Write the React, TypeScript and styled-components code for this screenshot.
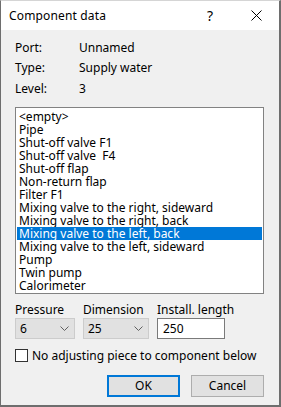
import React, { useState } from 'react';
import styled, { createGlobalStyle } from 'styled-components';

const GlobalStyle = createGlobalStyle`
  html, body {
    margin: 0;
    padding: 0;
    background: #ffffff;
  }
  body {
    font-family: 'Noto Sans', 'Liberation Sans', sans-serif;
    font-size: 12px;
    line-height: 15px;
    color: #000000;
  }
`;

const Window = styled.div`
  box-sizing: border-box;
  width: 281px;
  height: 407px;
  display: flex;
  flex-direction: column;
  background: #f0f0f0;
  border-top: 1px solid #d5d5d5;
  border-left: 1px solid #6e6e6e;
  border-right: 2px solid #6e6e6e;
  border-bottom: 2px solid #6e6e6e;
  overflow: hidden;
`;

const TitleBar = styled.div`
  height: 29px;
  flex-shrink: 0;
  display: flex;
  align-items: center;
  background: #ffffff;
  padding-left: 8px;
`;

const Title = styled.div`
  flex: 1;
  font-size: 12px;
  letter-spacing: 0.15px;
`;

const TitleButton = styled.div`
  width: 46px;
  height: 29px;
  display: flex;
  align-items: center;
  justify-content: center;
  font-size: 14px;
`;

const Body = styled.div`
  flex: 1;
  display: flex;
  flex-direction: column;
  padding: 7px 15px 0 14px;
`;

const InfoRow = styled.div`
  display: grid;
  grid-template-columns: 64px 1fr;
  height: 20.5px;
  align-items: center;
`;

const ListBox = styled.div`
  margin-top: 8px;
  box-sizing: border-box;
  height: 187px;
  flex-shrink: 0;
  background: #ffffff;
  border: 1px solid #828282;
  padding: 2px 1px;
  display: flex;
  flex-direction: column;
`;

const ListItem = styled.div<{ selected: boolean }>`
  height: 13px;
  line-height: 13px;
  padding-left: 2px;
  white-space: pre;
  cursor: default;
  background: ${({ selected }) => (selected ? '#0078d7' : 'transparent')};
  color: ${({ selected }) => (selected ? '#ffffff' : '#000000')};
`;

const FieldRow = styled.div`
  margin-top: 8px;
  display: flex;
  gap: 8px;
`;

const Field = styled.div<{ width: number }>`
  width: ${({ width }) => width}px;
  display: flex;
  flex-direction: column;
  gap: 1px;
`;

const FieldLabel = styled.span`
  white-space: nowrap;
  line-height: 15px;
`;

const Combo = styled.div`
  box-sizing: border-box;
  height: 21px;
  display: flex;
  align-items: center;
  justify-content: space-between;
  padding: 0 5px 0 4px;
  background: #e1e1e1;
  border: 1px solid #cccccc;
`;

const TextInput = styled.div`
  box-sizing: border-box;
  height: 21px;
  display: flex;
  align-items: center;
  padding-left: 5px;
  background: #ffffff;
  border: 1px solid #7a7a7a;
`;

const CheckRow = styled.label`
  margin-top: 9px;
  display: flex;
  align-items: center;
  gap: 4px;
  white-space: nowrap;
`;

const CheckBox = styled.span`
  box-sizing: border-box;
  width: 13px;
  height: 13px;
  background: #ffffff;
  border: 1px solid #333333;
`;

const ButtonRow = styled.div`
  margin-top: 12px;
  display: flex;
  justify-content: flex-end;
  gap: 11px;
`;

const Button = styled.button<{ primary?: boolean }>`
  box-sizing: border-box;
  width: 73px;
  height: 22px;
  padding: 0;
  font: inherit;
  line-height: 15px;
  color: #000000;
  background: #e1e1e1;
  border: ${({ primary }) => (primary ? '2px solid #0078d7' : '1px solid #adadad')};
`;

const items = [
  '<empty>',
  'Pipe',
  'Shut-off valve F1',
  'Shut-off valve  F4',
  'Shut-off flap',
  'Non-return flap',
  'Filter F1',
  'Mixing valve to the right, sideward',
  'Mixing valve to the right, back',
  'Mixing valve to the left, back',
  'Mixing valve to the left, sideward',
  'Pump',
  'Twin pump',
  'Calorimeter',
];

const Chevron = () => (
  <svg width="9" height="5" viewBox="0 0 9 5">
    <path d="M0.5 0.5 L4.5 4.5 L8.5 0.5" fill="none" stroke="#606060" strokeWidth="1" />
  </svg>
);

const App = () => {
  const [selected, setSelected] = useState(9);

  return (
    <>
      <GlobalStyle />
      <Window>
        <TitleBar>
          <Title>Component data</Title>
          <TitleButton>?</TitleButton>
          <TitleButton>
            <svg width="11" height="11" viewBox="0 0 11 11">
              <path d="M0.5 0.5 L10.5 10.5 M10.5 0.5 L0.5 10.5" stroke="#000000" strokeWidth="1" />
            </svg>
          </TitleButton>
        </TitleBar>
        <Body>
          <InfoRow>
            <span>Port:</span>
            <span>Unnamed</span>
          </InfoRow>
          <InfoRow>
            <span>Type:</span>
            <span>Supply water</span>
          </InfoRow>
          <InfoRow>
            <span>Level:</span>
            <span>3</span>
          </InfoRow>
          <ListBox>
            {items.map((item, i) => (
              <ListItem key={i} selected={i === selected} onClick={() => setSelected(i)}>
                {item}
              </ListItem>
            ))}
          </ListBox>
          <FieldRow>
            <Field width={60}>
              <FieldLabel>Pressure</FieldLabel>
              <Combo>
                <span>6</span>
                <Chevron />
              </Combo>
            </Field>
            <Field width={66}>
              <FieldLabel>Dimension</FieldLabel>
              <Combo>
                <span>25</span>
                <Chevron />
              </Combo>
            </Field>
            <Field width={68}>
              <FieldLabel>Install. length</FieldLabel>
              <TextInput>250</TextInput>
            </Field>
          </FieldRow>
          <CheckRow>
            <CheckBox />
            <span>No adjusting piece to component below</span>
          </CheckRow>
          <ButtonRow>
            <Button primary>OK</Button>
            <Button>Cancel</Button>
          </ButtonRow>
        </Body>
      </Window>
    </>
  );
};

export default App;
